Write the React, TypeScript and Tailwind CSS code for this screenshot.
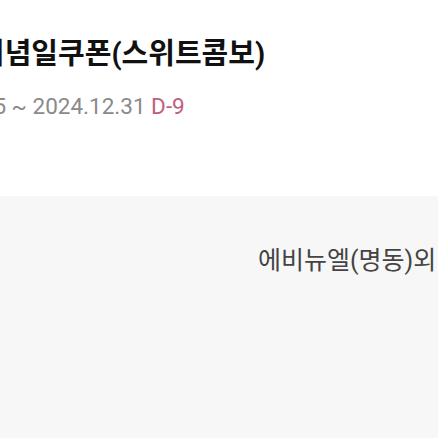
function App() {
  return (
    <div
      className="w-[438px] h-[438px] overflow-hidden bg-white flex flex-col"
      style={{ fontFamily: "Roboto, 'Noto Sans CJK KR', sans-serif" }}
    >
      <section className="h-[196px] shrink-0 pt-[33px] overflow-hidden">
        <h1 className="-ml-[22px] whitespace-nowrap text-[29px] font-bold leading-[42px] text-[#111]">
          기념일쿠폰(스위트콤보)
        </h1>
        <p className="-ml-[107px] mt-[16px] whitespace-nowrap text-[22.5px] leading-[30px] text-[#8a8a8a]">
          2024.12.15 ~ 2024.12.31 <span className="text-[#c0607e]">D-9</span>
        </p>
      </section>

      <section className="flex-1 bg-[#f7f7f7] pt-[47px] overflow-hidden">
        <p className="pl-[258px] whitespace-nowrap text-[25px] leading-[36px] text-[#444]">
          에비뉴엘(명동)외
        </p>
      </section>
    </div>
  );
}

export default App;
